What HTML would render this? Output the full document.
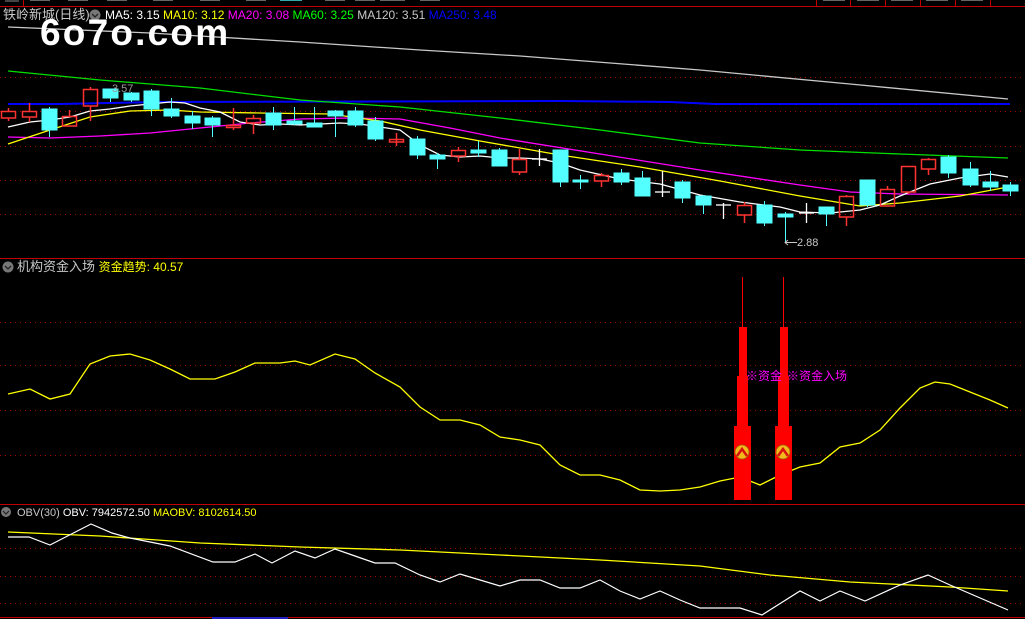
<!DOCTYPE html>
<html><head><meta charset="utf-8"><style>
html,body{margin:0;padding:0;background:#000;}
body{width:1025px;height:619px;overflow:hidden;position:relative;font-family:"Liberation Sans","Noto Sans CJK SC",sans-serif;}
.t{position:absolute;white-space:nowrap;font-size:12px;line-height:14px;}
</style></head><body>
<svg width="1025" height="619" style="position:absolute;left:0;top:0" xmlns="http://www.w3.org/2000/svg">
<g stroke="#c00000" stroke-width="1" fill="none">
<line x1="0" y1="6.5" x2="1025" y2="6.5"/>
<line x1="23.5" y1="0" x2="23.5" y2="6"/>
<line x1="816.5" y1="0" x2="816.5" y2="6"/><line x1="850.5" y1="0" x2="850.5" y2="6"/><line x1="885.5" y1="0" x2="885.5" y2="6"/><line x1="920.5" y1="0" x2="920.5" y2="6"/><line x1="955.5" y1="0" x2="955.5" y2="6"/><line x1="990.5" y1="0" x2="990.5" y2="6"/>
<line x1="0" y1="258.5" x2="1025" y2="258.5"/>
<line x1="0" y1="504.5" x2="1025" y2="504.5"/>
<line x1="0" y1="617.5" x2="1025" y2="617.5"/>
</g>
<rect x="5" y="0" width="14" height="2" fill="#444"/>
<g fill="#666"><rect x="30" y="0" width="20" height="1"/><rect x="68" y="0" width="20" height="1"/><rect x="107" y="0" width="20" height="1"/><rect x="153" y="0" width="20" height="1"/><rect x="200" y="0" width="20" height="1"/><rect x="246" y="0" width="20" height="1"/><rect x="325" y="0" width="20" height="1"/><rect x="355" y="0" width="20" height="1"/><rect x="380" y="0" width="25" height="1"/><rect x="420" y="0" width="20" height="1"/><rect x="823" y="0" width="22" height="1"/><rect x="857" y="0" width="22" height="1"/><rect x="891" y="0" width="22" height="1"/><rect x="926" y="0" width="22" height="1"/><rect x="961" y="0" width="22" height="1"/></g>
<rect x="280" y="0" width="22" height="1" fill="#3aa"/>
<g stroke="#a00000" stroke-width="1" stroke-dasharray="1,4">
<line x1="0" y1="77.5" x2="1025" y2="77.5"/><line x1="0" y1="111.5" x2="1025" y2="111.5"/><line x1="0" y1="146.5" x2="1025" y2="146.5"/><line x1="0" y1="180.5" x2="1025" y2="180.5"/><line x1="0" y1="214.5" x2="1025" y2="214.5"/>
<line x1="0" y1="322.5" x2="1025" y2="322.5"/><line x1="0" y1="365.5" x2="1025" y2="365.5"/><line x1="0" y1="410.5" x2="1025" y2="410.5"/><line x1="0" y1="455.5" x2="1025" y2="455.5"/>
<line x1="0" y1="548.5" x2="1025" y2="548.5"/><line x1="0" y1="576.5" x2="1025" y2="576.5"/><line x1="0" y1="603.5" x2="1025" y2="603.5"/>
</g>
<g fill="none" stroke-width="1.3">
<polyline stroke="#c8c8c8" points="8,27 150,33 300,42 420,50 520,56 700,70 850,84 1008,99"/>
<polyline stroke="#0000ff" stroke-width="2" points="8,104 60,104 160,102 560,101 670,102 715,104 1010,104"/>
<polyline stroke="#00e000" points="8,71 100,80 200,88 300,100 400,107 500,118 600,130 700,143 800,150 900,154 1008,158"/>
<polyline stroke="#ff00ff" points="8,137 50,138 100,136 150,133 200,128 250,123 300,119 350,118 400,119 450,128 500,138 600,154 700,170 800,185 850,192 900,194 1008,195"/>
<polyline stroke="#ffff00" points="8,144 50,130 90,117 130,111 170,110 200,112 260,113 330,114 380,121 420,130 480,141 560,155 640,167 720,181 800,196 860,206 900,203 960,196 1008,187"/>
<polyline stroke="#ffffff" points="8,127 30,122 50,120 70,117 90,111 110,109 130,106 150,104 170,102 185,103 200,108 220,112 240,122 260,125 280,124 300,125 320,124 340,123 360,124 380,127 400,130 420,145 440,155 460,157 480,156 500,158 520,158 540,159 560,163 580,170 620,179 660,184 700,195 740,202 780,207 800,212 830,213 860,210 880,205 900,196 930,184 960,178 990,174 1008,177"/>
</g>
<g stroke="#54ffff" fill="#54ffff">
<line x1="49.5" y1="107" x2="49.5" y2="137"/><rect x="42" y="109" width="15" height="21"/>
<line x1="110.5" y1="89" x2="110.5" y2="102"/><rect x="103" y="89" width="15" height="9"/>
<line x1="131.5" y1="92" x2="131.5" y2="102"/><rect x="124" y="93" width="15" height="7"/>
<line x1="151.5" y1="89" x2="151.5" y2="116"/><rect x="144" y="91" width="15" height="18"/>
<line x1="171.5" y1="98" x2="171.5" y2="118"/><rect x="164" y="109" width="15" height="7"/>
<line x1="192.5" y1="111" x2="192.5" y2="129"/><rect x="185" y="116" width="15" height="7"/>
<line x1="212.5" y1="116" x2="212.5" y2="137"/><rect x="205" y="118" width="15" height="7"/>
<line x1="273.5" y1="107" x2="273.5" y2="130"/><rect x="266" y="113" width="15" height="12"/>
<line x1="294.5" y1="107" x2="294.5" y2="125"/><rect x="287" y="121" width="15" height="3"/>
<line x1="314.5" y1="107" x2="314.5" y2="127"/><rect x="307" y="123" width="15" height="4"/>
<line x1="335.5" y1="110" x2="335.5" y2="137"/><rect x="328" y="111" width="15" height="5"/>
<line x1="355.5" y1="107" x2="355.5" y2="127"/><rect x="348" y="111" width="15" height="14"/>
<line x1="375.5" y1="117" x2="375.5" y2="141"/><rect x="368" y="121" width="15" height="18"/>
<line x1="417.5" y1="136" x2="417.5" y2="159"/><rect x="410" y="139" width="15" height="16"/>
<line x1="437.5" y1="153" x2="437.5" y2="169"/><rect x="430" y="155" width="15" height="4"/>
<line x1="478.5" y1="141" x2="478.5" y2="157"/><rect x="471" y="150" width="15" height="3"/>
<line x1="499.5" y1="148" x2="499.5" y2="166"/><rect x="492" y="150" width="15" height="16"/>
<line x1="560.5" y1="150" x2="560.5" y2="187"/><rect x="553" y="150" width="15" height="32"/>
<line x1="580.5" y1="175" x2="580.5" y2="189"/><rect x="573" y="180" width="15" height="2"/>
<line x1="621.5" y1="169" x2="621.5" y2="185"/><rect x="614" y="173" width="15" height="9"/>
<line x1="642.5" y1="171" x2="642.5" y2="196"/><rect x="635" y="178" width="15" height="18"/>
<line x1="682.5" y1="180" x2="682.5" y2="203"/><rect x="675" y="182" width="15" height="16"/>
<line x1="703.5" y1="195" x2="703.5" y2="214"/><rect x="696" y="196" width="15" height="9"/>
<line x1="764.5" y1="201" x2="764.5" y2="226"/><rect x="757" y="205" width="15" height="18"/>
<line x1="785.5" y1="212" x2="785.5" y2="243"/><rect x="778" y="214" width="15" height="3"/>
<line x1="826.5" y1="207" x2="826.5" y2="226"/><rect x="819" y="207" width="15" height="7"/>
<line x1="867.5" y1="180" x2="867.5" y2="207"/><rect x="860" y="180" width="15" height="25"/>
<line x1="948.5" y1="155" x2="948.5" y2="178"/><rect x="941" y="157" width="15" height="16"/>
<line x1="970.5" y1="162" x2="970.5" y2="187"/><rect x="963" y="169" width="15" height="16"/>
<line x1="990.5" y1="171" x2="990.5" y2="191"/><rect x="983" y="182" width="15" height="5"/>
<line x1="1010.5" y1="182" x2="1010.5" y2="196"/><rect x="1003" y="185" width="15" height="6"/>
</g>
<g stroke="#ff3232" fill="none" stroke-width="1.5">
<line x1="8.5" y1="108" x2="8.5" y2="111"/><line x1="8.5" y1="118" x2="8.5" y2="121"/><rect x="1.5" y="111.5" width="14" height="6.5"/>
<line x1="29.5" y1="103" x2="29.5" y2="111"/><line x1="29.5" y1="117" x2="29.5" y2="122"/><rect x="22.5" y="111.5" width="14" height="5.5"/>
<line x1="69.5" y1="110" x2="69.5" y2="116"/><rect x="62.5" y="116.5" width="14" height="9.5"/>
<line x1="90.5" y1="87" x2="90.5" y2="89"/><line x1="90.5" y1="106" x2="90.5" y2="121"/><rect x="83.5" y="89.5" width="14" height="16.5"/>
<line x1="233.5" y1="108" x2="233.5" y2="125"/><line x1="233.5" y1="127" x2="233.5" y2="130"/><rect x="226.5" y="125.5" width="14" height="2"/>
<line x1="253.5" y1="115" x2="253.5" y2="118"/><line x1="253.5" y1="123" x2="253.5" y2="134"/><rect x="246.5" y="118.5" width="14" height="4.5"/>
<line x1="396.5" y1="133" x2="396.5" y2="146"/><rect x="389.5" y="139.5" width="14" height="2.5"/>
<line x1="458.5" y1="147" x2="458.5" y2="150"/><line x1="458.5" y1="156" x2="458.5" y2="162"/><rect x="451.5" y="150.5" width="14" height="5.5"/>
<line x1="519.5" y1="149" x2="519.5" y2="159"/><line x1="519.5" y1="172" x2="519.5" y2="175"/><rect x="512.5" y="159.5" width="14" height="12.5"/>
<line x1="601.5" y1="173" x2="601.5" y2="175"/><line x1="601.5" y1="181" x2="601.5" y2="187"/><rect x="594.5" y="175.5" width="14" height="5.5"/>
<line x1="744.5" y1="202" x2="744.5" y2="205"/><line x1="744.5" y1="215" x2="744.5" y2="223"/><rect x="737.5" y="205.5" width="14" height="9.5"/>
<line x1="846.5" y1="195" x2="846.5" y2="196"/><line x1="846.5" y1="217" x2="846.5" y2="226"/><rect x="839.5" y="196.5" width="14" height="20.5"/>
<line x1="887.5" y1="186" x2="887.5" y2="189"/><rect x="880.5" y="189.5" width="14" height="16.5"/>
<line x1="908.5" y1="192" x2="908.5" y2="194"/><rect x="901.5" y="166.5" width="14" height="25.5"/>
<line x1="928.5" y1="158" x2="928.5" y2="159"/><line x1="928.5" y1="169" x2="928.5" y2="175"/><rect x="921.5" y="159.5" width="14" height="9.5"/>
</g>
<g stroke="#fff" stroke-width="1.3">
<line x1="539.5" y1="149" x2="539.5" y2="166"/><line x1="532" y1="159" x2="547" y2="159"/>
<line x1="662.5" y1="171" x2="662.5" y2="197"/><line x1="655" y1="192" x2="670" y2="192"/>
<line x1="723.5" y1="203" x2="723.5" y2="219"/><line x1="716" y1="205" x2="731" y2="205"/>
<line x1="806.5" y1="203" x2="806.5" y2="223"/><line x1="799" y1="213" x2="814" y2="213"/>
</g>
<g stroke="#c8c8c8" fill="none"><line x1="785" y1="242.5" x2="797" y2="242.5"/><polyline points="788,240 785,242.5 788,245"/></g>
<polyline fill="none" stroke="#ffff00" stroke-width="1.3" points="8,394 30,389 50,399 70,394 90,364 110,356 130,354 150,360 170,369 190,379 215,379 235,372 255,363 280,363 295,361 310,365 335,354 355,359 375,373 400,387 420,407 440,420 460,420 480,425 500,437 520,440 540,445 560,465 580,475 600,475 620,480 640,490 660,491 680,490 700,487 720,481 740,477 760,485 780,475 800,467 820,463 840,447 860,443 880,430 900,408 920,388 935,382 950,384 970,392 990,400 1008,408"/>
<g fill="#ff0000" stroke="#ff0000">
<line x1="742.5" y1="277" x2="742.5" y2="327"/>
<rect x="739" y="327" width="8" height="49" stroke="none"/><rect x="737" y="376" width="11" height="50" stroke="none"/><rect x="734" y="426" width="17" height="74" stroke="none"/>
<line x1="783.5" y1="277" x2="783.5" y2="327"/>
<rect x="780" y="327" width="8" height="49" stroke="none"/><rect x="778" y="376" width="11" height="50" stroke="none"/><rect x="775" y="426" width="17" height="74" stroke="none"/>
</g>
<g>
<circle cx="742" cy="452" r="7" fill="#f2b81c" stroke="#a06000" stroke-width="0.8"/><polyline points="737,456 742,449 747,456" fill="none" stroke="#d81010" stroke-width="2.5"/>
<circle cx="783" cy="452" r="7" fill="#f2b81c" stroke="#a06000" stroke-width="0.8"/><polyline points="778,456 783,449 788,456" fill="none" stroke="#d81010" stroke-width="2.5"/>
</g>
<polyline fill="none" stroke="#ffff00" stroke-width="1.3" points="8,532 100,536 200,543 300,547 400,550 500,555 600,560 700,566 770,575 850,582 950,587 1008,591"/>
<polyline fill="none" stroke="#ffffff" stroke-width="1.2" points="8,537 29,537 50,545 91,524 112,533 130,538 170,546 213,562 235,562 255,554 272,563 295,551 315,558 335,549 355,556 375,563 395,563 420,575 440,582 460,574 480,580 500,586 520,580 540,580 560,588 580,588 600,580 620,591 640,599 660,591 680,600 700,608 720,608 740,608 762,615 800,591 820,601 840,591 865,601 900,585 928,575 950,585 1008,610"/>
<rect x="212" y="617" width="76" height="2" fill="#2020c0"/>
<circle cx="95" cy="15" r="5.5" fill="#777"/><polyline points="92,14 95,17 98,14" fill="none" stroke="#222" stroke-width="1.3"/>
<circle cx="8" cy="267" r="5.5" fill="#777"/><polyline points="5,266 8,269 11,266" fill="none" stroke="#222" stroke-width="1.3"/>
<circle cx="6" cy="512" r="5" fill="#777"/><polyline points="3,511 6,514 9,511" fill="none" stroke="#222" stroke-width="1.2"/>
</svg>
<div class="t" style="left:3px;top:8px;font-size:13px;color:#c8c8c8">铁岭新城(日线)</div>
<div class="t" style="left:105px;top:8px"><span style="color:#fff">MA5: 3.15</span> <span style="color:#ff0">MA10: 3.12</span> <span style="color:#f0f">MA20: 3.08</span> <span style="color:#0f0">MA60: 3.25</span> <span style="color:#c8c8c8">MA120: 3.51</span> <span style="color:#00f">MA250: 3.48</span></div>
<div class="t" style="left:40px;top:13px;font-size:37px;line-height:40px;font-weight:bold;color:#fff;letter-spacing:2.2px">6o7o.com</div>
<div class="t" style="left:112px;top:82px;font-size:11px;color:#999">3.57</div>
<div class="t" style="left:797px;top:236px;font-size:11px;color:#c8c8c8">2.88</div>
<div class="t" style="left:17px;top:260px;font-size:13px;color:#c8c8c8">机构资金入场 <span style="color:#ff0;font-size:12px">资金趋势: 40.57</span></div>
<div class="t" style="left:746px;top:369px;color:#f0f">※资金</div>
<div class="t" style="left:787px;top:369px;color:#f0f">※资金入场</div>
<div class="t" style="left:17px;top:506px;font-size:11px;color:#c8c8c8">OBV(30) <span style="color:#fff">OBV: 7942572.50</span> <span style="color:#ff0">MAOBV: 8102614.50</span></div>
</body></html>
